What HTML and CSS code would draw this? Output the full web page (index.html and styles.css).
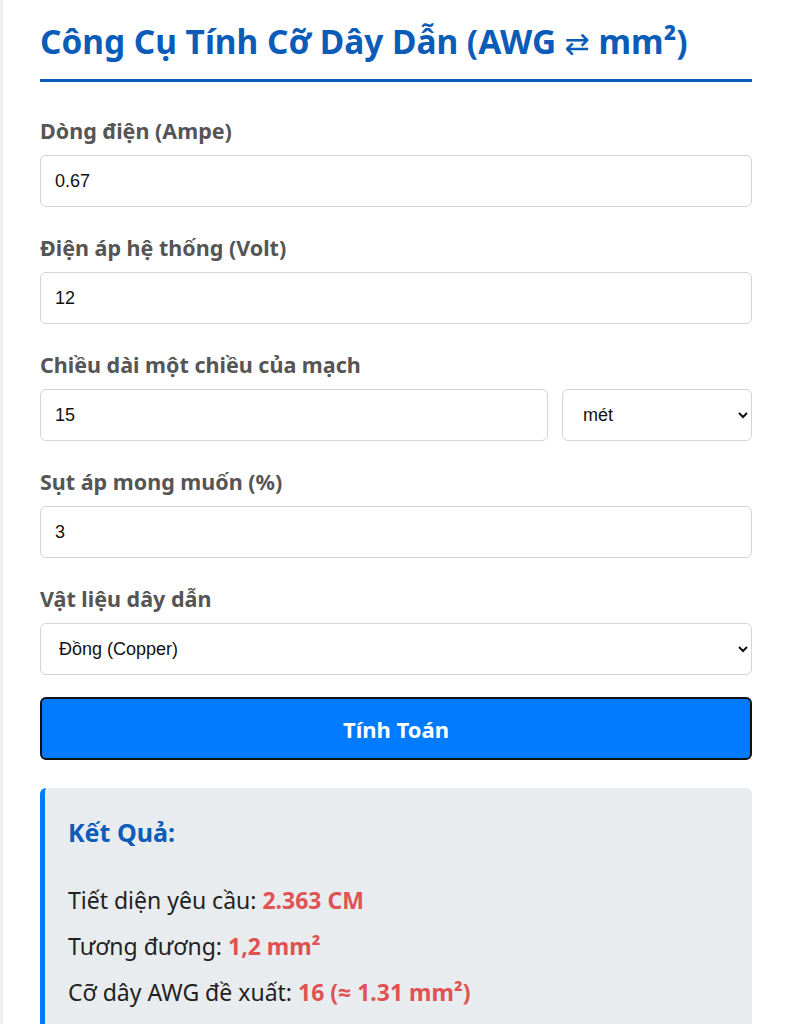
FILE: index.html
```html
<!DOCTYPE html>
<html lang="vi">
<head>
  <meta charset="UTF-8" />
  <title>Công Cụ Tính Cỡ Dây Dẫn</title>
  <link rel="stylesheet" href="styles.css">
</head>
<body>
  <div class="container">
    <h1>Công Cụ Tính Cỡ Dây Dẫn (AWG <span class="arrow">⇄</span> mm²)</h1>
    <form id="wireForm">
      <!-- dòng điện -->
      <div class="field">
        <label for="current">Dòng điện (Ampe)</label>
        <input type="text" id="current" value="0.67">
      </div>

      <!-- điện áp -->
      <div class="field">
        <label for="voltage">Điện áp hệ thống (Volt)</label>
        <input type="text" id="voltage" value="12">
      </div>

      <!-- chiều dài + đơn vị -->
      <div class="field">
        <label for="length">Chiều dài một chiều của mạch</label>
        <div class="row">
          <input type="text" id="length" value="15">
          <select id="unit" class="unit">
            <option>mét</option>
            <option>feet</option>
          </select>
        </div>
      </div>

      <!-- sụt áp -->
      <div class="field">
        <label for="drop">Sụt áp mong muốn (%)</label>
        <input type="text" id="drop" value="3">
      </div>

      <!-- vật liệu -->
      <div class="field">
        <label for="material">Vật liệu dây dẫn</label>
        <select id="material">
          <option>Đồng (Copper)</option>
          <option>Nhôm (Aluminum)</option>
        </select>
      </div>

      <button type="submit">Tính Toán</button>
    </form>

    <div class="result">
      <h3>Kết Quả:</h3>
      <p>Tiết diện yêu cầu: <b>2.363 CM</b></p>
      <p>Tương đương: <b>1,2 mm²</b></p>
      <p>Cỡ dây AWG đề xuất: <b>16 (≈ 1.31 mm²)</b></p>
    </div>
  </div>
</body>
</html>
```

FILE: styles.css
```css
html, body { margin: 0; padding: 0; }
body { background: #eef0f3; padding-left: 3px; font-family: "Noto Sans", "Open Sans", sans-serif; }
.container { background: #fff; padding: 17px 34px 20px 37px; }

h1 {
  color: #0a5cb8; font-size: 33.4px; font-weight: bold; margin: 0;
  padding-bottom: 14px; border-bottom: 3px solid #0a5cb8; line-height: 48px; height: 48px;
}
h1 .arrow { font-family: "DejaVu Sans", sans-serif; font-weight: normal; font-size: 30px; line-height: 1; }

form { margin-top: 34px; }
.field { margin-bottom: 26px; }
.field:last-of-type { margin-bottom: 0; }
label { display: block; color: #555; font-weight: bold; font-size: 21.5px; line-height: 30px; margin-bottom: 9px; }

input, select {
  display: block; width: 100%; box-sizing: border-box; height: 52px;
  font-family: "Liberation Sans", Arial, sans-serif; font-size: 18px; color: #111;
  padding: 0 14px; border: 1px solid #d4d4d4; border-radius: 6px; background: #fff;
}
select { padding-left: 14px; }
.row { display: flex; gap: 14px; }
.row input { flex: 1; }
.row .unit { width: 190px; flex: none; padding-left: 16px; }

button {
  display: block; width: 100%; height: 63px; margin-top: 22px;
  background: #007bff; color: #fff; font-family: "Noto Sans", sans-serif;
  font-weight: bold; font-size: 22px; border: 2px solid #111; border-radius: 6px; cursor: pointer;
}

.result {
  margin-top: 28px; background: #e9ecef; border-left: 5px solid #007bff;
  border-radius: 6px; padding: 26px 23px 20px;
}
.result h3 { margin: 0 0 34px; color: #0a5cb8; font-size: 25px; line-height: 36px; }
.result p { margin: 0 0 14px; font-size: 23px; line-height: 32px; color: #222; }
.result b { color: #e05252; }
```
